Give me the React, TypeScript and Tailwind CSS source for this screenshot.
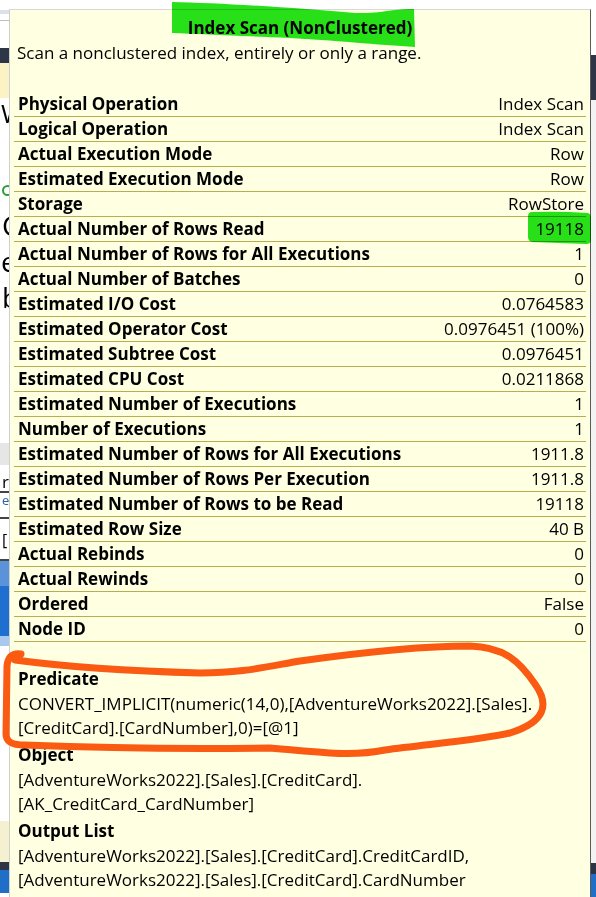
import React from "react";

const rows: [string, string][] = [
  ["Physical Operation", "Index Scan"],
  ["Logical Operation", "Index Scan"],
  ["Actual Execution Mode", "Row"],
  ["Estimated Execution Mode", "Row"],
  ["Storage", "RowStore"],
  ["Actual Number of Rows Read", "19118"],
  ["Actual Number of Rows for All Executions", "1"],
  ["Actual Number of Batches", "0"],
  ["Estimated I/O Cost", "0.0764583"],
  ["Estimated Operator Cost", "0.0976451 (100%)"],
  ["Estimated Subtree Cost", "0.0976451"],
  ["Estimated CPU Cost", "0.0211868"],
  ["Estimated Number of Executions", "1"],
  ["Number of Executions", "1"],
  ["Estimated Number of Rows for All Executions", "1911.8"],
  ["Estimated Number of Rows Per Execution", "1911.8"],
  ["Estimated Number of Rows to be Read", "19118"],
  ["Estimated Row Size", "40 B"],
  ["Actual Rebinds", "0"],
  ["Actual Rewinds", "0"],
  ["Ordered", "False"],
  ["Node ID", "0"],
];

const sections: [string, string[]][] = [
  [
    "Predicate",
    [
      "CONVERT_IMPLICIT(numeric(14,0),[AdventureWorks2022].[Sales].",
      "[CreditCard].[CardNumber],0)=[@1]",
    ],
  ],
  ["Object", ["[AdventureWorks2022].[Sales].[CreditCard].", "[AK_CreditCard_CardNumber]"]],
  [
    "Output List",
    [
      "[AdventureWorks2022].[Sales].[CreditCard].CreditCardID,",
      "[AdventureWorks2022].[Sales].[CreditCard].CardNumber",
    ],
  ],
];

const font = { fontFamily: '"Open Sans", "Noto Sans", "Liberation Sans", sans-serif' };

export default function App() {
  return (
    <div
      className="relative flex w-[596px] h-[897px] overflow-hidden bg-white text-black"
      style={font}
    >
      {/* left background strip */}
      <div className="flex w-[9px] shrink-0 flex-col overflow-hidden bg-white">
        <div className="h-[10px] shrink-0" />
        <div className="h-[4px] shrink-0 bg-[#dde2ea]" />
        <div className="h-[6px] shrink-0" />
        <div className="h-[1px] shrink-0 bg-[#bfbfbf]" />
        <div className="h-[27px] shrink-0" />
        <div className="h-[15px] shrink-0 bg-[#2e3546]" />
        <div className="h-[35px] shrink-0 bg-[#fbf3c6]" />
        <div className="h-[30px] w-[9px] shrink-0 overflow-hidden pl-[1px] text-[26px] leading-[30px] whitespace-nowrap">W</div>
        <div className="h-[55px] shrink-0" />
        <div className="flex h-[14px] shrink-0 items-center pl-[2px]">
          <div className="h-[11px] w-[11px] shrink-0 rounded-full border-2 border-[#2f9e3c]" />
        </div>
        <div className="h-[10px] shrink-0" />
        <div className="h-[36px] w-[9px] shrink-0 overflow-hidden pl-[2px] text-[28px] leading-[36px] whitespace-nowrap">C</div>
        <div className="h-[36px] w-[9px] shrink-0 overflow-hidden pl-[1px] text-[28px] leading-[36px] whitespace-nowrap">e</div>
        <div className="h-[36px] w-[9px] shrink-0 overflow-hidden pl-[2px] text-[28px] leading-[36px] whitespace-nowrap">b</div>
        <div className="h-[128px] shrink-0" />
        <div className="h-[22px] shrink-0 bg-[#e6e6e6]" />
        <div className="h-[8px] shrink-0" />
        <div className="h-[18px] w-[9px] shrink-0 overflow-hidden pl-[2px] text-[17px] leading-[18px] whitespace-nowrap">r</div>
        <div className="h-[2px] shrink-0 bg-[#444]" />
        <div className="h-[14px] w-[9px] shrink-0 overflow-hidden pl-[2px] text-[13px] leading-[14px] text-[#2b5fa8] whitespace-nowrap">e</div>
        <div className="h-[10px] shrink-0" />
        <div className="h-[2px] shrink-0 bg-[#444]" />
        <div className="h-[12px] shrink-0" />
        <div className="h-[18px] w-[9px] shrink-0 overflow-hidden pl-[2px] text-[16px] leading-[18px] whitespace-nowrap">[</div>
        <div className="h-[10px] shrink-0" />
        <div className="h-[2px] shrink-0 bg-[#444]" />
        <div className="h-[25px] shrink-0 bg-[#5b93da]" />
        <div className="h-[50px] shrink-0 bg-[#1e6fd0]" />
        <div className="h-[10px] shrink-0 bg-[#a9c8ee]" />
        <div className="h-[175px] shrink-0" />
        <div className="h-[41px] shrink-0 bg-[#f5f0d0]" />
        <div className="h-[8px] shrink-0 bg-[#2d3444]" />
        <div className="h-[23px] shrink-0 bg-[#1f6fc9]" />
      </div>

      {/* tooltip column */}
      <div className="flex w-[582px] shrink-0 flex-col bg-white pt-[9px]">
        <div className="flex-1 border-l border-r border-t border-l-[#cfcfcf] border-r-[#5a5a5a] border-t-[#d8d8d8] bg-[#ffffe1] pt-[4px]">
          <div className="h-[27px] text-center text-[17px] font-bold leading-[27px]">
            Index Scan (NonClustered)
          </div>
          <div className="h-[24px] pl-[7px] text-[17px] leading-[24px]">
            Scan a nonclustered index, entirely or only a range.
          </div>
          <div className="mx-[4px] mt-[27px] flex flex-col">
            {rows.map(([k, v]) => (
              <div
                key={k}
                className="flex h-[25px] items-center justify-between border-b border-[#b8ad4f] pl-[4px] pr-[2px] text-[17px] leading-[24px]"
              >
                <span className="font-bold">{k}</span>
                <span>{v}</span>
              </div>
            ))}
          </div>
          <div className="mt-[24px] flex flex-col gap-[2px] pl-[8px] text-[17px]">
            {sections.map(([h, lines]) => (
              <div key={h} className="flex flex-col">
                <div className="h-[26px] font-bold leading-[26px]">{h}</div>
                {lines.map((l) => (
                  <div key={l} className="h-[24px] whitespace-nowrap leading-[24px]">
                    {l}
                  </div>
                ))}
              </div>
            ))}
          </div>
        </div>
      </div>

      {/* right background strip */}
      <div className="flex w-[5px] shrink-0 flex-col">
        <div className="h-[55px] shrink-0 bg-white" />
        <div className="h-[45px] shrink-0 bg-[#2d3546]" />
        <div className="h-[763px] shrink-0 bg-[#f3f3f3]" />
        <div className="h-[11px] shrink-0 bg-[#2d3444]" />
        <div className="h-[23px] shrink-0 bg-[#1f6fc9]" />
      </div>

      {/* annotations */}
      <svg
        className="pointer-events-none absolute left-0 top-0 mix-blend-multiply"
        width="596"
        height="897"
        viewBox="0 0 596 897"
      >
        <path
          d="M172,2 C220,3 300,8 355,13 C380,14 395,8 414,9 L415,47 C380,45 330,40 290,38 C240,36 200,34 172,33 Z"
          fill="#27e01a"
        />
        <path
          d="M532,212 Q560,211 588,213 Q591,214 591,218 L591,240 Q591,244 586,244 Q560,243 532,242 Q528,241 528,237 L528,217 Q528,212 532,212 Z"
          fill="#27e01a"
        />
      </svg>
      <svg
        className="pointer-events-none absolute left-0 top-0"
        width="596"
        height="897"
        viewBox="0 0 596 897"
      >
        <path
          d="M21,654 C12,653 8,657 7,666 L6,734 C6,742 12,745 25,745 C100,748 200,749 270,748 C320,752 350,757 385,750 C430,744 480,740 510,733 C545,722 550,705 535,684 C520,662 505,647 470,646 C420,646 350,654 300,661 C260,668 240,673 200,673 C130,671 60,666 15,660"
          fill="none"
          stroke="#fa5a12"
          strokeWidth="7"
          strokeLinecap="round"
          strokeLinejoin="round"
        />
      </svg>
    </div>
  );
}
